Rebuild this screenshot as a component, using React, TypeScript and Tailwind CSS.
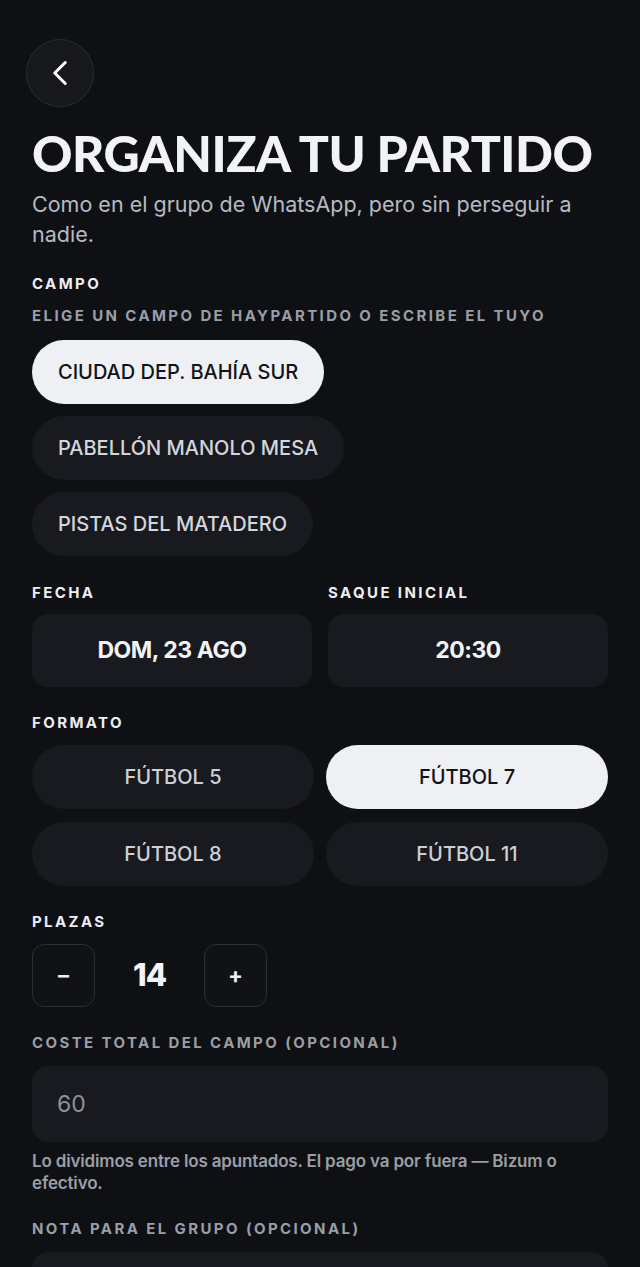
import React from 'react';
import { ChevronLeft } from 'lucide-react';

const campos = ['CIUDAD DEP. BAHÍA SUR', 'PABELLÓN MANOLO MESA', 'PISTAS DEL MATADERO'];
const formatos = ['FÚTBOL 5', 'FÚTBOL 7', 'FÚTBOL 8', 'FÚTBOL 11'];

const Label: React.FC<{ children: React.ReactNode; muted?: boolean; className?: string }> = ({ children, muted, className }) => (
  <div
    className={`text-[15px] leading-[20px] font-bold tracking-[0.16em] uppercase ${muted ? 'text-[#9a9ea7]' : 'text-[#eceef2]'} ${className ?? ''}`}
  >
    {children}
  </div>
);

const App: React.FC = () => {
  return (
    <div className="min-h-[1267px] w-full bg-[#0f1014] px-8 pt-[39px] pb-10 font-['Inter',sans-serif] text-white">
      {/* Back */}
      <button className="ml-[-6px] flex h-[68px] w-[68px] items-center justify-center rounded-full border border-[#2a2c31] bg-[#16181c]">
        <ChevronLeft className="h-[42px] w-[42px] text-white" strokeWidth={1.7} />
      </button>

      <h1 className="mt-[20px] whitespace-nowrap font-['Lato',sans-serif] text-[50px] leading-[52px] font-black tracking-[-0.01em] text-[#f2f3f6]">
        ORGANIZA TU PARTIDO
      </h1>
      <p className="mt-[10px] text-[21.5px] leading-[30px] text-[#b6bac2]">
        Como en el grupo de WhatsApp, pero sin perseguir a nadie.
      </p>

      {/* Campo */}
      <Label className="mt-[25px]">Campo</Label>
      <Label muted className="mt-[12px] text-[14.5px]">Elige un campo de HayPartido o escribe el tuyo</Label>
      <div className="mt-[14px] flex flex-col items-start gap-3">
        {campos.map((c, i) => (
          <button
            key={c}
            className={`h-[64px] rounded-full px-[26px] text-[20px] font-medium ${
              i === 0 ? 'bg-[#eef0f4] text-[#121317]' : 'bg-[#181a1f] text-[#d3d6dc]'
            }`}
          >
            {c}
          </button>
        ))}
      </div>

      {/* Fecha / hora */}
      <div className="mt-[27px] grid grid-cols-2 gap-4">
        <div>
          <Label>Fecha</Label>
          <div className="mt-[11px] flex h-[73px] items-center justify-center rounded-2xl bg-[#181a1f] text-[23px] font-bold tracking-[-0.02em] text-[#f2f3f6]">
            DOM, 23 AGO
          </div>
        </div>
        <div>
          <Label>Saque inicial</Label>
          <div className="mt-[11px] flex h-[73px] items-center justify-center rounded-2xl bg-[#181a1f] text-[23px] font-bold tracking-[-0.02em] text-[#f2f3f6]">
            20:30
          </div>
        </div>
      </div>

      {/* Formato */}
      <Label className="mt-[26px]">Formato</Label>
      <div className="mt-[12px] grid grid-cols-2 gap-x-3 gap-y-[13px]">
        {formatos.map((f) => (
          <button
            key={f}
            className={`h-[64px] rounded-full text-[20px] font-medium ${
              f === 'FÚTBOL 7' ? 'bg-[#eef0f4] text-[#121317]' : 'bg-[#181a1f] text-[#cdd0d6]'
            }`}
          >
            {f}
          </button>
        ))}
      </div>

      {/* Plazas */}
      <Label className="mt-[26px]">Plazas</Label>
      <div className="mt-[12px] flex items-center">
        <button className="flex h-[63px] w-[63px] items-center justify-center rounded-xl border border-[#2c2e34] bg-[#111216] text-[22px] font-bold text-[#eceef2]">
          –
        </button>
        <div className="w-[109px] text-center text-[31px] font-extrabold tracking-[-0.03em] text-[#f2f3f6]">14</div>
        <button className="flex h-[63px] w-[63px] items-center justify-center rounded-xl border border-[#2c2e34] bg-[#111216] text-[22px] font-bold text-[#eceef2]">
          +
        </button>
      </div>

      {/* Coste */}
      <Label muted className="mt-[26px]">Coste total del campo (opcional)</Label>
      <div className="mt-[13px] flex h-[76px] items-center rounded-2xl bg-[#181a1f] px-[25px] text-[23px] text-[#8d919a]">
        60
      </div>
      <p className="mt-[8px] text-[17px] leading-[22px] font-semibold tracking-[-0.01em] text-[#9a9ea7]">
        Lo dividimos entre los apuntados. El pago va por fuera — Bizum o efectivo.
      </p>

      {/* Nota */}
      <Label muted className="mt-[25px]">Nota para el grupo (opcional)</Label>
      <div className="mt-[13px] h-[110px] rounded-2xl bg-[#181a1f]" />
    </div>
  );
};

export default App;
